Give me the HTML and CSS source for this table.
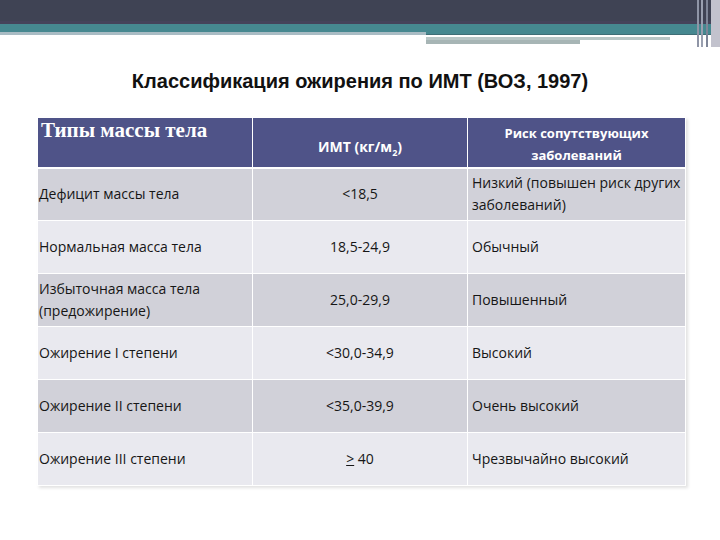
FILE: index.html
```html
<!DOCTYPE html>
<html lang="ru">
<head>
<meta charset="utf-8">
<link rel="stylesheet" href="styles.css">
</head>
<body>
<div class="deco">
  <div class="topbar"></div>
  <div class="bands">
    <div class="band-left">
      <div class="teal"></div>
      <div class="greyline"></div>
    </div>
    <div class="band-right">
      <div class="teal tall"></div>
      <div class="darkline"></div>
      <div class="gap"></div>
      <div class="line-a"></div>
      <div class="line-b"></div>
    </div>
  </div>
  <div class="edge">
    <span class="e1"></span><span class="e2"></span><span class="e3"></span><span class="e4"></span>
  </div>
</div>
<h1 class="title">Классификация ожирения по ИМТ (ВОЗ, 1997)</h1>
<table class="bmi">
  <colgroup><col class="c1"><col class="c2"><col class="c3"></colgroup>
  <thead>
    <tr>
      <th class="h-type">Типы массы тела</th>
      <th class="h-center h-imt">ИМТ (кг/м<sub>2</sub>)</th>
      <th class="h-center h-risk">Риск сопутствующих<br>заболеваний</th>
    </tr>
  </thead>
  <tbody>
    <tr class="dark"><td>Дефицит массы тела</td><td class="num">&lt;18,5</td><td class="risk">Низкий (повышен риск других заболеваний)</td></tr>
    <tr class="light"><td>Нормальная масса тела</td><td class="num">18,5-24,9</td><td class="risk">Обычный</td></tr>
    <tr class="dark"><td>Избыточная масса тела (предожирение)</td><td class="num">25,0-29,9</td><td class="risk">Повышенный</td></tr>
    <tr class="light"><td>Ожирение I степени</td><td class="num">&lt;30,0-34,9</td><td class="risk">Высокий</td></tr>
    <tr class="dark"><td>Ожирение II степени</td><td class="num">&lt;35,0-39,9</td><td class="risk">Очень высокий</td></tr>
    <tr class="light"><td>Ожирение III степени</td><td class="num"><span class="ge">&gt;</span> 40</td><td class="risk">Чрезвычайно высокий</td></tr>
  </tbody>
</table>
</body>
</html>
```
FILE: styles.css
```css
html, body {
  margin: 0;
  padding: 0;
  background: #ffffff;
}
body {
  width: 720px;
  height: 540px;
  position: relative;
  overflow: hidden;
  font-family: "Open Sans", "Liberation Sans", sans-serif;
}
.deco {
  height: 47px;
}
.topbar {
  height: 21px;
  background: #3f4354;
  border-bottom: 3px solid #45435a;
}
.bands {
  display: flex;
}
.band-left {
  width: 426px;
}
.band-right {
  flex: 1;
}
.teal {
  height: 8px;
  background: #468890;
}
.teal.tall {
  height: 10px;
}
.greyline {
  height: 3px;
  background: #a9bcc4;
}
.darkline {
  height: 1px;
  background: #3f6e76;
}
.gap {
  height: 2px;
  background: #ffffff;
}
.line-a {
  width: 244px;
  height: 3px;
  background: #b8c6c6;
}
.line-b {
  width: 154px;
  height: 4px;
  background: #a7b5b5;
}
.edge {
  position: absolute;
  top: 0;
  right: 0;
  width: 23px;
  height: 47px;
  display: flex;
}
.edge span {
  display: block;
  height: 100%;
}
.e1 { width: 2px; background: #8f95a6; margin-right: 2px; }
.e2 { width: 2px; background: #9aa0b0; margin-right: 3px; }
.e3 { width: 2px; background: #7f8698; margin-right: 3px; }
.e4 { flex: 1; background: #c2c2cd; }

.title {
  margin: 22px 0 0 0;
  height: 24px;
  line-height: 24px;
  font-family: "Liberation Sans", Arial, sans-serif;
  font-weight: bold;
  font-size: 20px;
  text-align: center;
  color: #111111;
}
.bmi {
  margin: 24px 0 0 37px;
  width: 648px;
  border-collapse: collapse;
  table-layout: fixed;
  color: #161616;
  font-size: 14px;
  box-shadow: 2px 2px 3px rgba(0, 0, 0, 0.12);
}
.c1 { width: 215px; }
.c2 { width: 215px; }
.c3 { width: 218px; }
.bmi th, .bmi td {
  border: 1px solid #ffffff;
  padding: 0 2px;
  box-sizing: border-box;
}
.bmi thead th {
  background: #4f5388;
  color: #ffffff;
  height: 50px;
  border-bottom: 2px solid #ffffff;
  vertical-align: top;
}
.bmi .h-type {
  font-family: "Liberation Serif", "Times New Roman", serif;
  font-weight: bold;
  font-size: 21px;
  line-height: 24px;
  text-align: left;
  padding: 0 3px;
}
.bmi .h-center {
  font-size: 13px;
  font-weight: bold;
  text-align: center;
  line-height: 22px;
}
.bmi .h-risk {
  padding-top: 4px;
}
.bmi .h-imt {
  font-size: 14px;
  padding-top: 18px;
}
.h-center sub {
  font-size: 9px;
}
.bmi tbody td {
  height: 53px;
  line-height: 22px;
  vertical-align: middle;
}
.bmi tbody td:first-child {
  padding-left: 1px;
}
.bmi td.num {
  text-align: center;
}
.bmi td.risk {
  padding-left: 4px;
}
tr.dark td {
  background: #d1d1d9;
}
tr.light td {
  background: #e9e9ef;
}
.ge {
  text-decoration: underline;
}
```
